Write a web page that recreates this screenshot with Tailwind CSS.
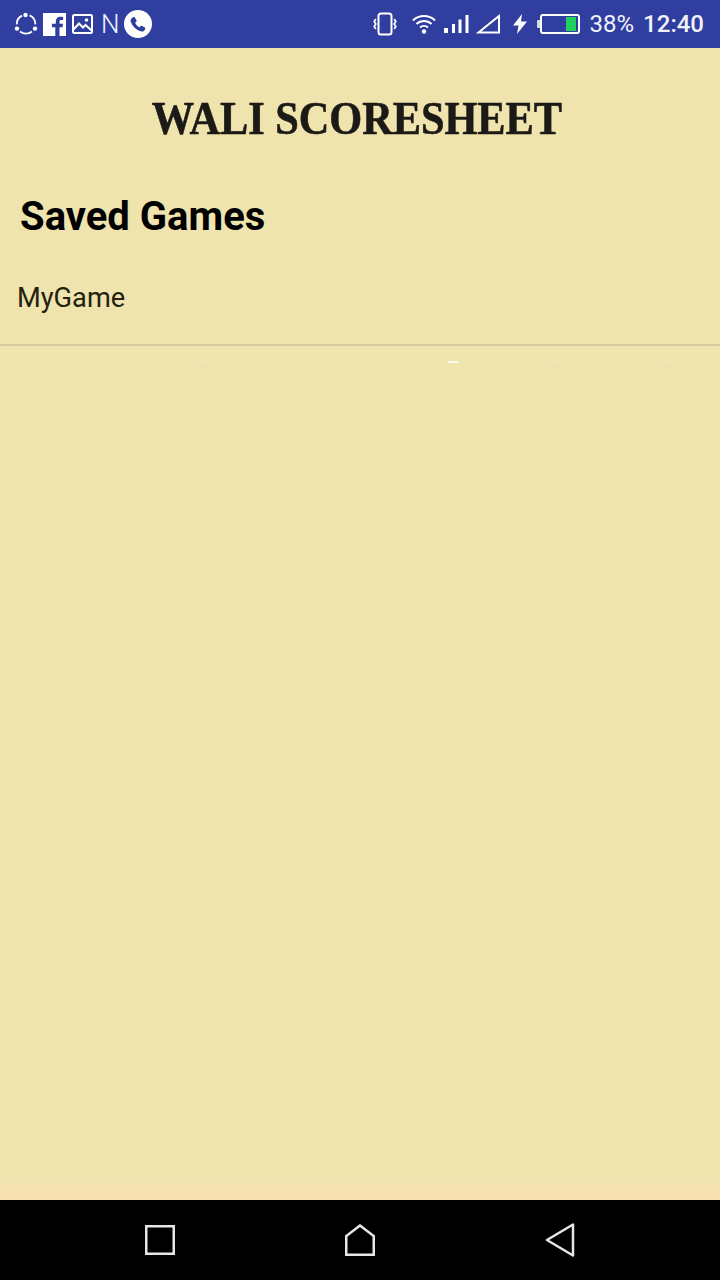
<!DOCTYPE html>
<html>
<head>
<meta charset="utf-8">
<script src="https://cdn.jsdelivr.net/npm/@tailwindcss/browser@4"></script>
</head>
<body>
<div class="w-[720px] h-[1280px] flex flex-col overflow-hidden bg-[#efe3ae] font-['Roboto',sans-serif]">
  <header class="h-12 shrink-0 bg-[#303f9f] flex items-center text-white">
    <div class="flex items-center pl-[14px]">
      <svg width="24" height="24" viewBox="0 0 24 24" fill="none" stroke="#fff" stroke-width="1.800"><path d="M8 3.600A9.400 9.400 0 0 0 2.800 12.400M15.600 3.400A9.400 9.400 0 0 1 21.300 12.400M6 19.500a9.500 9.500 0 0 0 12 0"/><circle cx="11.500" cy="3" r="2.200" fill="#fff" stroke="none"/><circle cx="3" cy="16.600" r="2.200" fill="#fff" stroke="none"/><circle cx="21" cy="16.600" r="2.200" fill="#fff" stroke="none"/></svg>
      <svg class="ml-[5px]" width="23" height="23" viewBox="0 0 23 23"><path fill="#fff" d="M0 0h23v23h-6.500v-8.700h3l.5-3.500h-3.500V8.800c0-1 .3-1.700 1.700-1.700h1.900V4c-.4 0-1.500-.2-2.800-.2-2.700 0-4.500 1.700-4.500 4.700v2.300H9v3.500h3.300V23H0z"/></svg>
      <svg class="ml-[6px]" width="21" height="20" viewBox="0 0 21 20" fill="none" stroke="#fff" stroke-width="2"><rect x="1" y="1" width="19" height="18" rx="1.500"/><path d="M1.500 15.500 7 9.500l4 4 2.500-2.500 6 5.500"/><circle cx="14.500" cy="6" r="1.800" fill="#fff" stroke="none"/></svg>
      <span class="ml-[8px] w-[18px] text-[26px] leading-none font-light text-[#f0f4ff]">N</span>
      <svg class="ml-[5px]" width="28" height="28" viewBox="0 0 28 28"><circle cx="14" cy="14" r="14" fill="#fff"/><path fill="#303f9f" d="M7.500 8.500c1-1.500 2.500-2 3.200-1.200l1.700 2.700c.4.700.2 1.300-.3 1.800l-.9.900c.8 2 2.300 3.600 4.300 4.500l1-1c.5-.5 1.100-.6 1.700-.3l2.700 1.700c.8.600.4 2.200-1.100 3.300-1 .8-2.400.8-4 .2-4.300-1.700-7.300-4.800-9-9-.5-1.300-.2-2.700.7-3.600z"/></svg>
    </div>
    <div class="ml-auto flex items-center pr-[16px]">
      <svg width="24" height="24" viewBox="0 0 24 24" fill="none" stroke="#fff" stroke-width="2"><rect x="5.500" y="1.500" width="13" height="21" rx="2.500"/><path d="M2.800 7 1.200 9.500 2.800 12l-1.600 2.500L2.800 17M21.200 7l1.600 2.500L21.200 12l1.600 2.500L21.200 17" stroke-width="1.700"/></svg>
      <svg class="ml-[15px]" width="24" height="20" viewBox="0 0 24 20" fill="none" stroke="#fff" stroke-width="2"><path d="M1 6.500a16 16 0 0 1 22 0M4.500 10a11 11 0 0 1 15 0M8 13.500a6 6 0 0 1 8 0"/><circle cx="12" cy="17.500" r="2.200" fill="#fff" stroke="none"/></svg>
      <svg class="ml-[8px]" width="25" height="20" viewBox="0 0 25 20" fill="#fff"><rect x="0" y="14" width="4" height="5"/><rect x="8" y="10" width="3" height="9"/><rect x="14.500" y="5.500" width="3" height="13.500"/><rect x="21.500" y="1" width="3" height="18"/></svg>
      <svg class="ml-[7px]" width="24" height="20" viewBox="0 0 24 20" fill="none" stroke="#fff" stroke-width="2" stroke-linejoin="miter"><path d="M2.500 18.500 23 2v16.500z"/></svg>
      <svg class="ml-[13px]" width="14" height="20" viewBox="0 0 14 20" fill="#fff"><path d="M9 0 0 11.500h5.500L4 20l10-12.500H8z"/></svg>
      <div class="ml-[10px] flex items-center">
        <div class="w-[3px] h-[8px] bg-white/80 rounded-l-[1px]"></div>
        <div class="w-[40px] h-[20px] border-2 border-white rounded-[3px] flex justify-end py-[1px] pr-[2px]"><div class="w-[10px] h-full bg-[#22d05c]"></div></div>
      </div>
      <span class="ml-[10px] text-[24px] leading-none text-[#f2f3fa]">38%</span>
      <span class="ml-[9px] text-[24px] leading-none font-medium text-[#f2f3fa]">12:40</span>
    </div>
  </header>

  <main class="flex-1 relative">
    <div class="h-[142px] flex justify-center items-center pr-[6px] pb-[2px]">
      <h1 class="font-['Liberation_Serif',serif] font-bold text-[47px] leading-none text-[#1c1a16] blur-[0.7px] whitespace-nowrap scale-x-[0.9] [-webkit-text-stroke:0.6px_#1c1a16]">WALI SCORESHEET</h1>
    </div>
    <h2 class="pl-5 h-[52px] pt-[1px] text-[40px] leading-[52px] font-bold text-black">Saved Games</h2>
    <div class="h-[104px] border-b-2 border-[#d6cb9c] pl-[17px] pt-[40px]">
      <span class="block text-[27.2px] leading-[32px] text-[#24210f]">MyGame</span>
    </div>
    <div class="absolute left-[448px] top-[313px] w-[10px] h-[2px] bg-white/80"></div>
    <div class="absolute left-[200px] top-[313px] w-[6px] h-[1px] bg-white/30"></div>
    <div class="absolute left-[554px] top-[313px] w-[6px] h-[1px] bg-white/30"></div>
    <div class="absolute left-[666px] top-[313px] w-[6px] h-[1px] bg-white/30"></div>
    <div class="absolute bottom-0 inset-x-0 h-[22px] bg-linear-to-b from-transparent to-[#f8dfb0]"></div>
  </main>

  <nav class="h-20 shrink-0 bg-black flex items-center relative">
    <div class="w-[320px] flex justify-center">
      <svg width="30" height="30" viewBox="0 0 30 30" fill="none" stroke="#e6e6e6" stroke-width="2.500"><rect x="1.250" y="1.250" width="27.500" height="27.500"/></svg>
    </div>
    <div class="w-[80px] flex justify-center">
      <svg width="30" height="32" viewBox="0 0 30 32" fill="none" stroke="#e6e6e6" stroke-width="2.500"><path d="M1.250 30.750V12L15 1.500 28.750 12v18.750z"/></svg>
    </div>
    <div class="w-[320px] flex justify-center">
      <svg width="30" height="34" viewBox="0 0 30 34" fill="none" stroke="#e6e6e6" stroke-width="2.500" stroke-linejoin="round"><path d="M28 1.500v31L2 17z"/></svg>
    </div>
  </nav>
</div>
</body>
</html>
